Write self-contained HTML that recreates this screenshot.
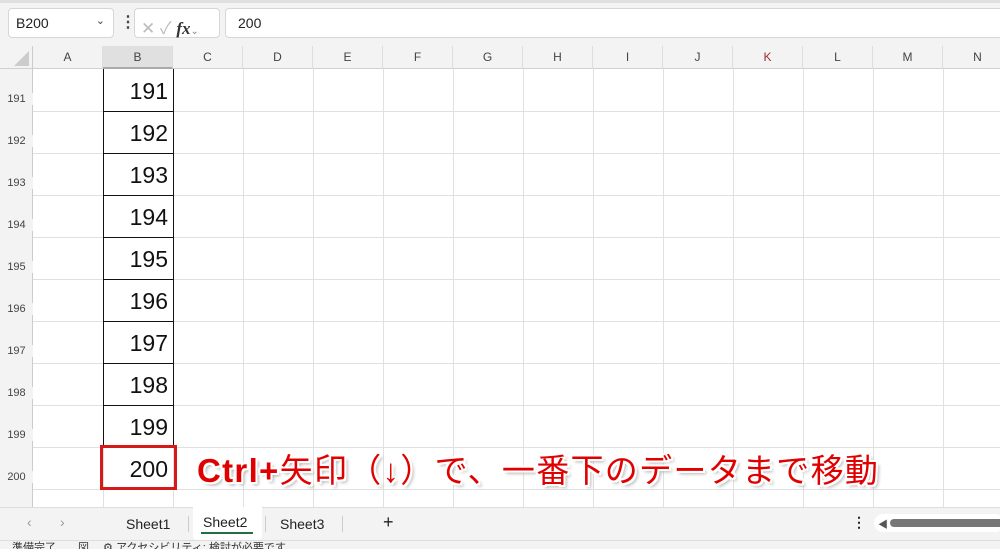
<!DOCTYPE html>
<html><head><meta charset="utf-8"><style>
*{margin:0;padding:0;box-sizing:border-box}
body{width:1000px;height:549px;overflow:hidden;background:#fff;font-family:"Liberation Sans","Noto Sans CJK JP",sans-serif;position:relative}
.top{position:absolute;left:0;top:0;width:1000px;height:46px;background:#f3f3f3;border-top:3px solid #e0e0e0}
.box{position:absolute;background:#fff;border:1px solid #d6d6d6;border-radius:4px;font-size:14px;color:#222}
.colh{position:absolute;top:46px;height:23px;background:#f3f3f3;border-bottom:1px solid #d0d0d0;width:1000px;left:0}
.ch{position:absolute;top:0;height:23px;width:70px;text-align:center;font-size:12px;color:#444;line-height:23px;border-right:1px solid #ddd}
.rh{position:absolute;left:0;width:33px;font-size:11px;color:#444;text-align:center;background:#f3f3f3}
.vl{position:absolute;top:69px;width:1px;height:438px;background:#e0e0e0}
.hl{position:absolute;left:33px;height:1px;width:967px;background:#e0e0e0}
.num{position:absolute;left:104px;width:69px;text-align:right;padding-right:5px;font-size:23px;color:#111;height:42px;line-height:44px}
</style></head><body>
<div class="top"></div>
<div class="box" style="left:8px;top:8px;width:106px;height:30px;padding:6px 0 0 7px">B200<span style="position:absolute;right:8px;top:5px;font-size:11px;color:#444">&#8964;</span></div>
<div style="position:absolute;left:120px;top:12px;font-size:16px;color:#444;font-weight:bold">&#8942;</div>
<div class="box" style="left:134px;top:8px;width:86px;height:30px;color:#bbb;padding:5px 0 0 6px;font-size:17px">✕ ✓ <i style="color:#333;font-family:'Liberation Serif',serif;font-weight:bold">fx</i><span style="font-size:10px;color:#888">&#8964;</span></div>
<div class="box" style="left:225px;top:8px;width:790px;height:30px;padding:6px 0 0 12px">200</div>
<div class="colh">
<div style="position:absolute;left:0;top:0;width:33px;height:23px;border-right:1px solid #ccc"><div style="position:absolute;right:3px;bottom:3px;width:0;height:0;border-left:15px solid transparent;border-bottom:15px solid #ccc"></div></div>
<div class="ch" style="left:33px">A</div><div class="ch" style="left:103px;background:#e0e0e0;border-bottom:2px solid #aaa">B</div><div class="ch" style="left:173px">C</div><div class="ch" style="left:243px">D</div><div class="ch" style="left:313px">E</div><div class="ch" style="left:383px">F</div><div class="ch" style="left:453px">G</div><div class="ch" style="left:523px">H</div><div class="ch" style="left:593px">I</div><div class="ch" style="left:663px">J</div><div class="ch" style="left:733px;color:#a03030">K</div><div class="ch" style="left:803px">L</div><div class="ch" style="left:873px">M</div><div class="ch" style="left:943px">N</div>
</div>
<div class="rh" style="top:69px;height:438px;border-right:1px solid #ccc"></div>
<div class="vl" style="left:173px"></div><div class="vl" style="left:243px"></div><div class="vl" style="left:313px"></div><div class="vl" style="left:383px"></div><div class="vl" style="left:453px"></div><div class="vl" style="left:523px"></div><div class="vl" style="left:593px"></div><div class="vl" style="left:663px"></div><div class="vl" style="left:733px"></div><div class="vl" style="left:803px"></div><div class="vl" style="left:873px"></div><div class="vl" style="left:943px"></div><div class="vl" style="left:103px"></div>
<div class="hl" style="top:111px"></div><div class="hl" style="top:153px"></div><div class="hl" style="top:195px"></div><div class="hl" style="top:237px"></div><div class="hl" style="top:279px"></div><div class="hl" style="top:321px"></div><div class="hl" style="top:363px"></div><div class="hl" style="top:405px"></div><div class="hl" style="top:447px"></div><div class="hl" style="top:489px"></div>
<div style="position:absolute;left:103px;top:69px;width:71px;height:379px;border:1px solid #111;border-top:none"></div>
<div style="position:absolute;left:104px;top:111px;width:69px;height:1px;background:#111"></div>
<div style="position:absolute;left:104px;top:153px;width:69px;height:1px;background:#111"></div>
<div style="position:absolute;left:104px;top:195px;width:69px;height:1px;background:#111"></div>
<div style="position:absolute;left:104px;top:237px;width:69px;height:1px;background:#111"></div>
<div style="position:absolute;left:104px;top:279px;width:69px;height:1px;background:#111"></div>
<div style="position:absolute;left:104px;top:321px;width:69px;height:1px;background:#111"></div>
<div style="position:absolute;left:104px;top:363px;width:69px;height:1px;background:#111"></div>
<div style="position:absolute;left:104px;top:405px;width:69px;height:1px;background:#111"></div>
<div class="num" style="top:69px">191</div><div class="num" style="top:111px">192</div><div class="num" style="top:153px">193</div><div class="num" style="top:195px">194</div><div class="num" style="top:237px">195</div><div class="num" style="top:279px">196</div><div class="num" style="top:321px">197</div><div class="num" style="top:363px">198</div><div class="num" style="top:405px">199</div><div class="num" style="top:447px">200</div>
<div class="rh" style="top:93px">191</div><div class="rh" style="top:135px">192</div><div class="rh" style="top:177px">193</div><div class="rh" style="top:219px">194</div><div class="rh" style="top:261px">195</div><div class="rh" style="top:303px">196</div><div class="rh" style="top:345px">197</div><div class="rh" style="top:387px">198</div><div class="rh" style="top:429px">199</div><div class="rh" style="top:471px">200</div>
<div style="position:absolute;left:100px;top:445px;width:77px;height:45px;border:3px solid #d61a1a"></div>
<div style="position:absolute;left:197px;top:444px;font-size:33px;color:#e00000;white-space:nowrap;letter-spacing:1.3px;text-shadow:2px 0 #fff,-2px 0 #fff,0 2px #fff,0 -2px #fff,2px 2px #fff,-2px -2px #fff,2px -2px #fff,-2px 2px #fff,3px 3px 3px #aaa"><b>Ctrl+</b>矢印（↓）で、一番下のデータまで移動</div>
<div style="position:absolute;left:0;top:507px;width:1000px;height:33px;background:#f3f3f3;border-top:1px solid #ddd;font-size:14px;color:#222">
<span style="position:absolute;left:27px;top:6px;color:#999">&lsaquo;</span><span style="position:absolute;left:60px;top:6px;color:#999">&rsaquo;</span>
<span style="position:absolute;left:126px;top:8px">Sheet1</span>
<div style="position:absolute;left:193px;top:-1px;width:69px;height:33px;background:#fff;border-radius:0 0 4px 4px"></div>
<span style="position:absolute;left:203px;top:6px">Sheet2</span><div style="position:absolute;left:201px;top:24px;width:52px;height:2px;background:#1e7145"></div>
<span style="position:absolute;left:280px;top:8px">Sheet3</span>
<div style="position:absolute;left:188px;top:8px;width:1px;height:16px;background:#ccc"></div><div style="position:absolute;left:265px;top:8px;width:1px;height:16px;background:#ccc"></div><div style="position:absolute;left:342px;top:8px;width:1px;height:16px;background:#ccc"></div>
<span style="position:absolute;left:383px;top:4px;font-size:18px">+</span>
<span style="position:absolute;left:852px;top:6px;font-weight:bold">&#8942;</span>
<div style="position:absolute;left:874px;top:6px;width:130px;height:18px;background:#fff;border-radius:9px"></div>
<span style="position:absolute;left:878px;top:8px;font-size:10px;color:#555">&#9664;</span>
<div style="position:absolute;left:890px;top:11px;width:115px;height:8px;background:#777;border-radius:4px"></div>
</div>
<div style="position:absolute;left:0;top:540px;width:1000px;height:9px;background:#f3f3f3;border-top:1px solid #ddd;overflow:hidden;font-size:11px;color:#333"><span style="position:absolute;left:12px;top:-2px">準備完了　　図　 ⚙ アクセシビリティ: 検討が必要です</span></div>
</body></html>
